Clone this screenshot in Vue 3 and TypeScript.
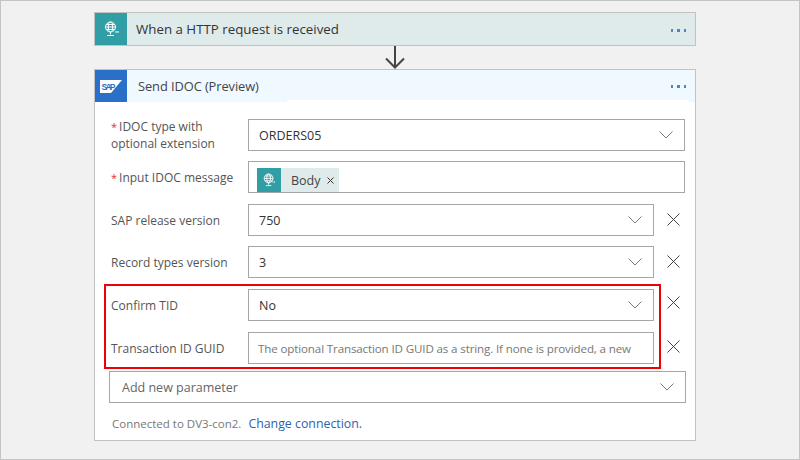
<script setup lang="ts">
interface Row {
  label: string
  value: string
  placeholder?: boolean
  select?: boolean
}
const optional: Row[] = [
  { label: 'SAP release version', value: '750', select: true },
  { label: 'Record types version', value: '3', select: true },
  { label: 'Confirm TID', value: 'No', select: true },
  {
    label: 'Transaction ID GUID',
    value: 'The optional Transaction ID GUID as a string. If none is provided, a new',
    placeholder: true,
  },
]
</script>

<template>
  <div class="page">
    <section class="trigger">
      <div class="icon teal">
        <svg width="20" height="20" viewBox="0 0 20 20" fill="none" stroke="#fff" stroke-width="1">
          <circle cx="9.500" cy="8" r="5" />
          <ellipse cx="9.500" cy="8" rx="2.200" ry="5" />
          <path d="M4.500 8h10M5.500 5.500h8M5.500 10.500h8M9.500 13v2.500M6 16.500h7" />
          <path d="M14.500 13h3.500" stroke-width="2" stroke-dasharray="1 1" />
        </svg>
      </div>
      <div class="title">When a HTTP request is received</div>
      <div class="dots"><i></i><i></i><i></i></div>
    </section>

    <div class="arrow">
      <svg width="22" height="23" viewBox="0 0 22 23" fill="none" stroke="#444" stroke-width="2">
        <path d="M11 0v21M2 12.500l9 9 9-9" />
      </svg>
    </div>

    <section class="card">
      <header class="card-head">
        <div class="icon sap">
          <svg width="22" height="13" viewBox="0 0 22 13">
            <path d="M0 0h22L11 13H0z" fill="#fff" />
            <text x="1.500" y="9.800" class="sap-text" textLength="14">SAP</text>
          </svg>
        </div>
        <div class="title card-title">Send IDOC (Preview)</div>
        <div class="dots"><i></i><i></i><i></i></div>
      </header>

      <div class="body">
        <div class="row">
          <label class="lbl two"><span class="req">*</span>IDOC type with optional extension</label>
          <div class="field">
            <span class="val">ORDERS05</span>
            <svg class="chev" width="14" height="8" viewBox="0 0 14 8" fill="none" stroke="#7a7a7a"><path d="M.5.500 7 7 13.500.500" /></svg>
          </div>
        </div>

        <div class="row">
          <label class="lbl"><span class="req">*</span>Input IDOC message</label>
          <div class="field token-field">
            <span class="token">
              <span class="token-icon">
                <svg width="16" height="16" viewBox="0 0 20 20" fill="none" stroke="#fff" stroke-width="1.100">
                  <circle cx="9.500" cy="8" r="5.500" />
                  <ellipse cx="9.500" cy="8" rx="2.400" ry="5.500" />
                  <path d="M4 8h11M5 5h9M5 11h9M9.500 13.500v2.500M6 17h7" />
                  <path d="M14.500 12.500h3" stroke-width="2" stroke-dasharray="1 1" />
                </svg>
              </span>
              <span class="token-text">Body</span>
              <svg class="token-x" width="7" height="7" viewBox="0 0 7 7" stroke="#333" stroke-width="1"><path d="M.5.500l6 6M6.500.500l-6 6" /></svg>
            </span>
          </div>
        </div>

        <div v-for="r in optional" :key="r.label" class="row">
          <label class="lbl">{{ r.label }}</label>
          <div class="field short">
            <span :class="r.placeholder ? 'ph' : 'val'">{{ r.value }}</span>
            <svg v-if="r.select" class="chev" width="14" height="8" viewBox="0 0 14 8" fill="none" stroke="#7a7a7a"><path d="M.5.500 7 7 13.500.500" /></svg>
          </div>
          <svg class="remove" width="13" height="13" viewBox="0 0 13 13" fill="none" stroke="#444"><path d="M.5.500l12 12M12.500.500l-12 12" /></svg>
        </div>

        <div class="add">
          <span>Add new parameter</span>
          <svg class="chev" width="14" height="8" viewBox="0 0 14 8" fill="none" stroke="#7a7a7a"><path d="M.5.500 7 7 13.500.500" /></svg>
        </div>

        <div class="foot">
          Connected to DV3-con2.<a class="link">Change connection.</a>
        </div>

        <div class="highlight"></div>
      </div>
    </section>
  </div>
</template>

<style>
html, body { margin: 0; background: #f1f1f1; }
</style>

<style scoped>
.page {
  box-sizing: border-box;
  width: 800px;
  height: 460px;
  padding: 11px 0 0 93px;
  border: 1px solid #c4c4c4;
  background: #f1f1f1;
  font-family: "Open Sans", "Noto Sans", sans-serif;
  overflow: hidden;
}
.trigger {
  box-sizing: border-box;
  display: flex;
  width: 602px;
  height: 34px;
  border: 1px solid #c2c2c2;
  background: #dfebeb;
  align-items: center;
}
.icon {
  flex: none;
  width: 32px;
  height: 32px;
  display: flex;
  align-items: center;
  justify-content: center;
}
.teal { background: #309ea4; }
.sap { background: #2a70c8; align-self: flex-start; }
.title {
  flex: 1;
  margin-left: 9px;
  font-size: 13.300px;
  color: #333;
}
.card-title {
  margin: 2px 0 0 11px;
  font-size: 12.900px;
  letter-spacing: -.1px;
  color: #444;
}
.dots { display: flex; gap: 4px; margin: 2px 9px 0 0; }
.dots i { width: 2.500px; height: 3px; background: #4d85c8; }
.arrow { display: flex; justify-content: center; width: 602px; height: 23px; }
.card {
  box-sizing: border-box;
  width: 602px;
  height: 372px;
  border: 1px solid #c2c2c2;
  background: #fff;
}
.card-head {
  position: relative;
  display: flex;
  align-items: center;
  height: 30px;
  background: #f0f9ff;
}
.card-head::before,
.card-head::after {
  content: "";
  position: absolute;
  top: 30px;
  height: 2px;
  background: #f0f9ff;
}
.card-head::before { left: 32px; width: 160px; }
.card-head::after { right: 0; width: 6px; }
.body {
  position: relative;
  padding: 19px 10px 0 14px;
}
.row {
  display: flex;
  align-items: center;
  height: 32px;
  margin-bottom: 11px;
}
.row:nth-child(1),
.row:nth-child(3) { margin-bottom: 10px; }
.lbl {
  box-sizing: border-box;
  flex: none;
  width: 139px;
  padding-left: 2px;
  font-size: 12px;
  line-height: 17px;
  color: #555;
}
.two { padding-right: 20px; }
.req { margin-right: 2px; font-size: 11px; color: #e0303a; }
.field {
  box-sizing: border-box;
  flex: none;
  display: flex;
  align-items: center;
  justify-content: space-between;
  width: 437px;
  height: 32px;
  padding: 0 10px;
  border: 1px solid #a6a6a6;
  background: #fff;
}
.short { width: 406px; }
.token-field { padding: 0 8px; justify-content: flex-start; align-items: flex-end; }
.val { font-size: 12.500px; color: #333; }
.ph { margin-left: -1px; font-size: 11.600px; letter-spacing: -.14px; color: #777; white-space: nowrap; }
.chev { flex: none; margin: 0 1px 1px 0; }
.token { display: flex; align-items: center; height: 24px; background: #dfebeb; }
.token-icon {
  width: 24px;
  height: 24px;
  display: flex;
  align-items: center;
  justify-content: center;
  background: #309ea4;
}
.token-text { margin-left: 10px; font-size: 12.500px; color: #444; }
.token-x { margin: 1px 5px 0 6px; }
.remove { flex: none; margin: 0 0 2px 13px; }
.row:nth-child(5) .remove { margin-bottom: 5px; }
.row:nth-child(6) .remove { margin-bottom: 4px; }
.add {
  box-sizing: border-box;
  display: flex;
  align-items: center;
  justify-content: space-between;
  width: 577px;
  height: 32px;
  margin-top: -4px;
  padding: 0 10px 0 12px;
  border: 1px solid #a6a6a6;
  font-size: 12.500px;
  color: #666;
}
.foot {
  margin: 12px 0 0 3px;
  font-size: 11.500px;
  color: #777;
}
.link { margin-left: 7px; font-size: 12.350px; color: #2a62b0; }
.highlight {
  position: absolute;
  left: 9px;
  top: 184px;
  box-sizing: border-box;
  width: 557px;
  height: 85px;
  border: 2px solid #f00000;
  pointer-events: none;
}
.sap-text { font: bold 8.500px "Liberation Sans", sans-serif; fill: #2a70c8; }
</style>
